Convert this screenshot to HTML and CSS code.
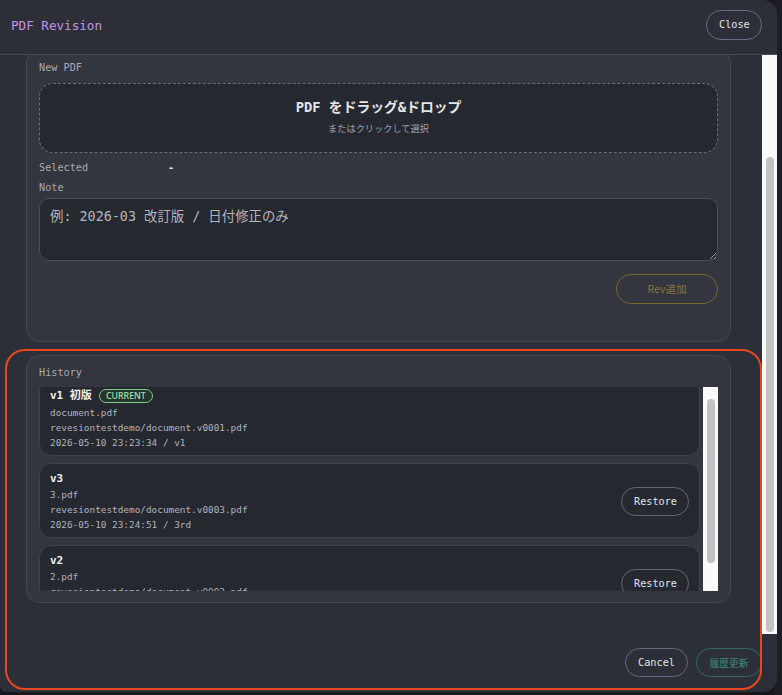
FILE: index.html
```html
<!DOCTYPE html>
<html lang="ja">
<head>
<meta charset="utf-8">
<title>PDF Revision</title>
<link rel="stylesheet" href="styles.css">
</head>
<body>
<div class="bg-strip"></div>
<div class="modal">
  <header class="modal-head">
    <h1 class="modal-title">PDF Revision</h1>
    <button class="btn btn-plain btn-close">Close</button>
  </header>
  <div class="modal-body">
    <div class="body-scroll">
      <div class="body-inner">
        <section class="card card-new">
          <div class="label">New PDF</div>
          <div class="dropzone">
            <div class="drop-title">PDF をドラッグ&amp;ドロップ</div>
            <div class="drop-sub">またはクリックして選択</div>
          </div>
          <div class="field-row"><span class="label">Selected</span><span class="value">-</span></div>
          <div class="label note-label">Note</div>
          <textarea class="note" placeholder="例: 2026-03 改訂版 / 日付修正のみ"></textarea>
          <div class="actions"><button class="btn btn-gold">Rev追加</button></div>
        </section>
        <section class="card card-history">
          <div class="label">History</div>
          <div class="list">
            <div class="list-scroll">
              <div class="list-inner">
                <div class="item">
                  <div class="item-main">
                    <div class="item-title item-title-badge">v1 初版 <span class="badge">CURRENT</span></div>
                    <div class="item-line">document.pdf</div>
                    <div class="item-line">revesiontestdemo/document.v0001.pdf</div>
                    <div class="item-line">2026-05-10 23:23:34 / v1</div>
                  </div>
                </div>
                <div class="item">
                  <div class="item-main">
                    <div class="item-title">v3</div>
                    <div class="item-line">3.pdf</div>
                    <div class="item-line">revesiontestdemo/document.v0003.pdf</div>
                    <div class="item-line">2026-05-10 23:24:51 / 3rd</div>
                  </div>
                  <button class="btn btn-plain btn-restore">Restore</button>
                </div>
                <div class="item">
                  <div class="item-main">
                    <div class="item-title">v2</div>
                    <div class="item-line">2.pdf</div>
                    <div class="item-line">revesiontestdemo/document.v0002.pdf</div>
                    <div class="item-line">2026-05-10 23:24:12 / 2nd</div>
                  </div>
                  <button class="btn btn-plain btn-restore">Restore</button>
                </div>
              </div>
            </div>
            <div class="scrollbar list-bar"><div class="thumb"></div></div>
          </div>
        </section>
      </div>
    </div>
    <div class="scrollbar main-bar"><div class="thumb"></div></div>
  </div>
  <footer class="modal-foot">
    <button class="btn btn-plain btn-cancel">Cancel</button>
    <button class="btn btn-teal">履歴更新</button>
  </footer>
  <div class="highlight"></div>
</div>
</body>
</html>
```

FILE: styles.css
```css
html, body {
  margin: 0;
  padding: 0;
}
body {
  width: 782px;
  height: 695px;
  background: #17181c;
  overflow: hidden;
  position: relative;
  font-family: "DejaVu Sans Mono", "Noto Sans CJK JP", monospace;
}
.bg-strip {
  position: absolute;
  right: 0;
  top: 0;
  width: 8px;
  height: 695px;
  background: #1d1e23;
}
.modal {
  position: relative;
  width: 777px;
  height: 692px;
  background: #2d2f38;
  border-radius: 0 14px 14px 6px;
  display: flex;
  flex-direction: column;
  overflow: hidden;
}
.modal-head {
  height: 50px;
  padding: 0 15px 4px 11px;
  border-bottom: 1px solid #474a58;
  display: flex;
  align-items: center;
  justify-content: space-between;
  flex: none;
}
.modal-title {
  margin: 2px 0 0;
  font-size: 12.6px;
  font-weight: normal;
  color: #c492ea;
  line-height: 16px;
}
.btn {
  box-sizing: border-box;
  height: 30px;
  padding: 0 12px;
  border-radius: 15px;
  background: transparent;
  font-family: "DejaVu Sans Mono", "Noto Sans CJK JP", monospace;
  font-size: 10.2px;
  line-height: 28px;
  cursor: pointer;
}
.btn-plain {
  border: 1px solid #6a6c84;
  color: #e2e3e8;
}
.btn-close {
  width: 56px;
}
.btn-restore {
  width: 68px;
  height: 29px;
  border-color: #63667a;
  flex: none;
}
.btn-cancel {
  width: 63px;
  height: 29px;
  border-color: #686a7e;
}
.btn-gold {
  min-width: 102px;
  border: 1px solid #7a672c;
  color: #8c773a;
  font-family: "Noto Sans CJK JP", sans-serif;
  font-size: 10.6px;
}
.btn-teal {
  width: 66px;
  height: 29px;
  padding: 0 10px;
  border: 1px solid #2f6c5f;
  color: #3e8b79;
  font-family: "Noto Sans CJK JP", sans-serif;
  font-size: 9.8px;
}
.modal-body {
  height: 579px;
  display: flex;
  flex: none;
}
.body-scroll {
  flex: 1;
  overflow: hidden;
}
.body-inner {
  margin-top: -6px;
  padding: 0 31px 0 26px;
}
.card {
  background: #33353f;
  border: 1px solid #444755;
  border-radius: 14px;
  padding: 0 12px;
}
.card-new {
  padding-top: 11px;
  padding-bottom: 37px;
}
.label {
  font-size: 10.2px;
  line-height: 14px;
  color: #a7a9b2;
}
.dropzone {
  margin-top: 8px;
  box-sizing: border-box;
  height: 70px;
  border: 1px dashed #6c6e7b;
  border-radius: 14px;
  background: #262830;
  padding-top: 14px;
  text-align: center;
}
.drop-title {
  font-size: 13.8px;
  font-weight: bold;
  line-height: 18px;
  color: #e4e5ea;
}
.drop-sub {
  margin-top: 6px;
  font-family: "Noto Sans CJK JP", sans-serif;
  font-size: 9.2px;
  line-height: 13px;
  color: #a1a3ac;
}
.field-row {
  margin-top: 8px;
  display: grid;
  grid-template-columns: 129px 1fr;
  line-height: 14px;
}
.value {
  font-size: 10.2px;
  color: #e6e7ea;
  font-weight: bold;
}
.note-label {
  margin-top: 6px;
}
.note {
  display: block;
  box-sizing: border-box;
  width: 100%;
  height: 63px;
  margin-top: 3px;
  padding: 9px 10px;
  border: 1px solid #4a4d5c;
  border-radius: 10px;
  background: #262830;
  color: #e6e7ea;
  font-family: "DejaVu Sans Mono", "Noto Sans CJK JP", monospace;
  font-size: 13.4px;
  line-height: 18px;
  outline: none;
}
.note::placeholder {
  color: #b3b5bd;
}
.actions {
  margin-top: 13px;
  display: flex;
  justify-content: flex-end;
}
.card-history {
  margin-top: 13px;
  padding-top: 10px;
  padding-bottom: 11px;
}
.list {
  margin-top: 7px;
  height: 204px;
  display: flex;
}
.list-scroll {
  flex: 1;
  overflow: hidden;
}
.list-inner {
  margin-top: -8px;
  padding-right: 3px;
  display: flex;
  flex-direction: column;
  gap: 7px;
}
.item {
  display: flex;
  align-items: center;
  justify-content: space-between;
  background: #262830;
  border: 1px solid #3f4250;
  border-radius: 12px;
  padding: 7px 10px 5px 10px;
}
.item-title {
  font-size: 11px;
  font-weight: bold;
  line-height: 16px;
  color: #f0f1f4;
  display: flex;
  align-items: center;
}
.item-title-badge {
  height: 18px;
}
.badge {
  margin-left: 7px;
  box-sizing: border-box;
  height: 14px;
  width: 54px;
  border: 1px solid #79cf8a;
  border-radius: 7px;
  background: #27332c;
  color: #a2e2ae;
  font-family: "Noto Sans", sans-serif;
  font-size: 8.8px;
  font-weight: 500;
  line-height: 12px;
  text-align: center;
}
.item-line {
  font-size: 9.4px;
  line-height: 15px;
  color: #b1b3bb;
}
.scrollbar {
  flex: none;
  width: 15px;
  background: #fafafa;
}
.scrollbar .thumb {
  width: 8px;
  background: #c2c2c2;
  border-radius: 4px;
}
.main-bar .thumb {
  margin-left: 4px;
  margin-top: 102px;
  height: 475px;
}
.list-bar .thumb {
  margin-left: 4px;
  margin-top: 12px;
  height: 164px;
}
.modal-foot {
  flex: 1;
  display: flex;
  justify-content: flex-end;
  align-items: center;
  gap: 8px;
  padding: 0 15px 1px 0;
}
.highlight {
  position: absolute;
  left: 5px;
  top: 349px;
  width: 753px;
  height: 337px;
  border: 2px solid #e9471c;
  border-radius: 20px;
  pointer-events: none;
}
```
